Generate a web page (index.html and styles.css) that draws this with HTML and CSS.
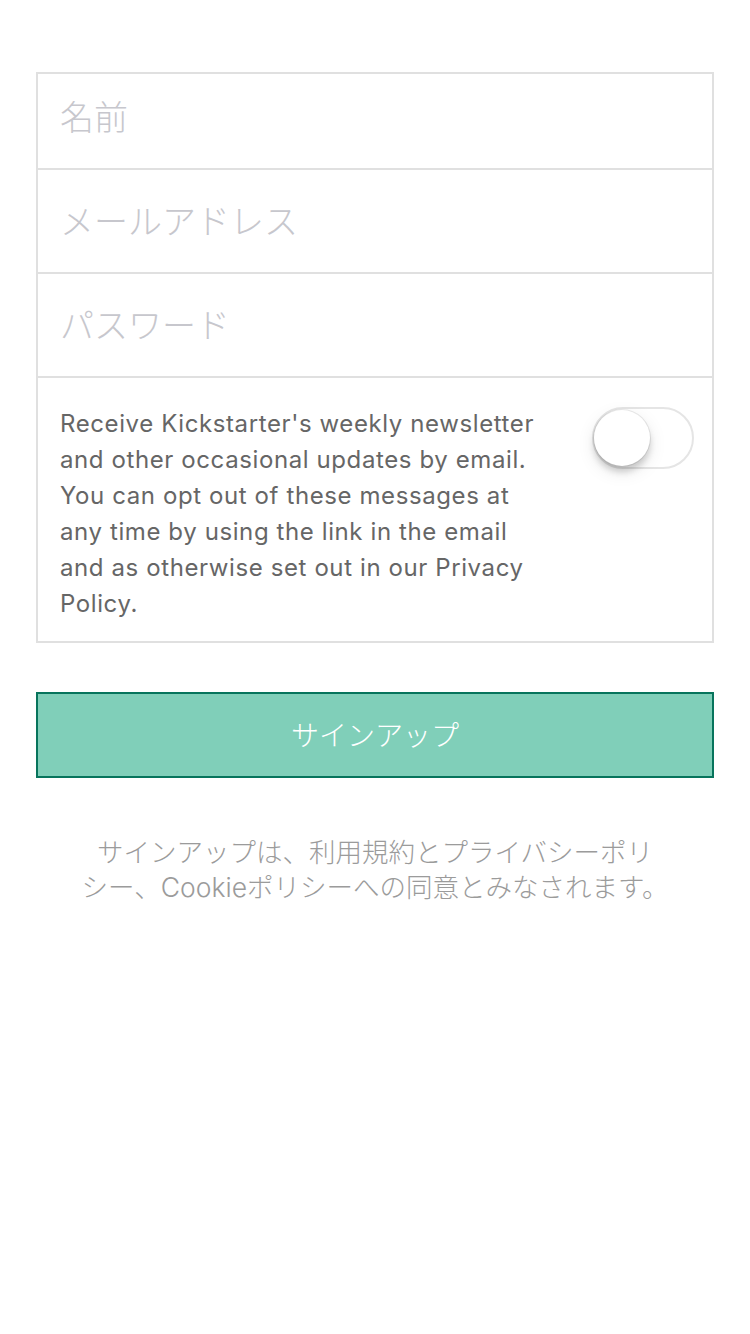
FILE: index.html
```html
<!DOCTYPE html>
<html lang="ja">
<head>
<meta charset="utf-8">
<title>サインアップ</title>
<link rel="stylesheet" href="styles.css">
</head>
<body>
<main class="page">
  <form class="form">
    <div class="field field-first"><input class="input" type="text" placeholder="名前"></div>
    <div class="field"><input class="input" type="email" placeholder="メールアドレス"></div>
    <div class="field"><input class="input" type="password" placeholder="パスワード"></div>
    <div class="newsletter">
      <p class="newsletter-text">Receive Kickstarter's weekly newsletter and other occasional updates by email. You can opt out of these messages at any time by using the link in the email and as otherwise set out in our Privacy Policy.</p>
      <span class="switch"><span class="knob"></span></span>
    </div>
  </form>
  <button class="signup" type="button">サインアップ</button>
  <p class="legal">サインアップは、利用規約とプライバシーポリ<br>シー、Cookieポリシーへの同意とみなされます。</p>
</main>
</body>
</html>
```

FILE: styles.css
```css
html, body {
  margin: 0;
  padding: 0;
  background: #ffffff;
}
body {
  font-family: "Liberation Sans", "Noto Sans CJK JP", sans-serif;
}
.page {
  width: 750px;
  padding: 72px 36px 0;
  box-sizing: border-box;
  display: flex;
  flex-direction: column;
}
.form {
  margin: 0;
  border: 2px solid #e0e0e0;
  display: flex;
  flex-direction: column;
}
.field {
  height: 102px;
  box-sizing: border-box;
  border-bottom: 2px solid #e0e0e0;
  display: flex;
  align-items: center;
  padding: 0 22px 4px;
}
.field + .field {
  height: 104px;
}
.field-first {
  height: 96px;
  padding-bottom: 12px;
}
.input {
  border: 0;
  outline: none;
  padding: 0;
  margin: 0;
  width: 100%;
  background: transparent;
  font-family: "Noto Sans CJK JP", sans-serif;
  font-size: 34px;
  font-weight: 300;
  color: #333;
}
.input::placeholder {
  color: #c7c7cd;
}
.newsletter {
  height: 263px;
  box-sizing: border-box;
  display: flex;
  align-items: flex-start;
  justify-content: space-between;
  padding: 28px 18px 0 22px;
}
.newsletter-text {
  margin: 0;
  width: 488px;
  font-family: "Inter", "Liberation Sans", sans-serif;
  font-size: 24px;
  letter-spacing: 0.6px;
  line-height: 36px;
  color: #666666;
}
.switch {
  position: relative;
  flex: none;
  width: 102px;
  height: 62px;
  margin-top: 1px;
  box-sizing: border-box;
  border: 2px solid #e5e5e5;
  border-radius: 31px;
  background: #ffffff;
}
.knob {
  position: absolute;
  left: 0;
  top: 1px;
  width: 56px;
  height: 56px;
  border-radius: 50%;
  background: #ffffff;
  box-shadow: 0 6px 6px rgba(0,0,0,0.16), 0 0 0 1px rgba(0,0,0,0.08), 0 6px 18px rgba(0,0,0,0.10);
}
.signup {
  margin-top: 49px;
  height: 86px;
  width: 100%;
  border: 2px solid #07745c;
  background: #80cfb9;
  color: #ffffff;
  font-family: "Noto Sans CJK JP", sans-serif;
  font-size: 28px;
  font-weight: 300;
  padding: 0 0 2px;
}
.legal {
  margin: 57px 0 0;
  text-align: center;
  font-family: "Inter", "Noto Sans CJK JP", sans-serif;
  font-size: 26.5px;
  line-height: 35px;
  color: #9b9b9b;
  font-weight: 300;
}
```
